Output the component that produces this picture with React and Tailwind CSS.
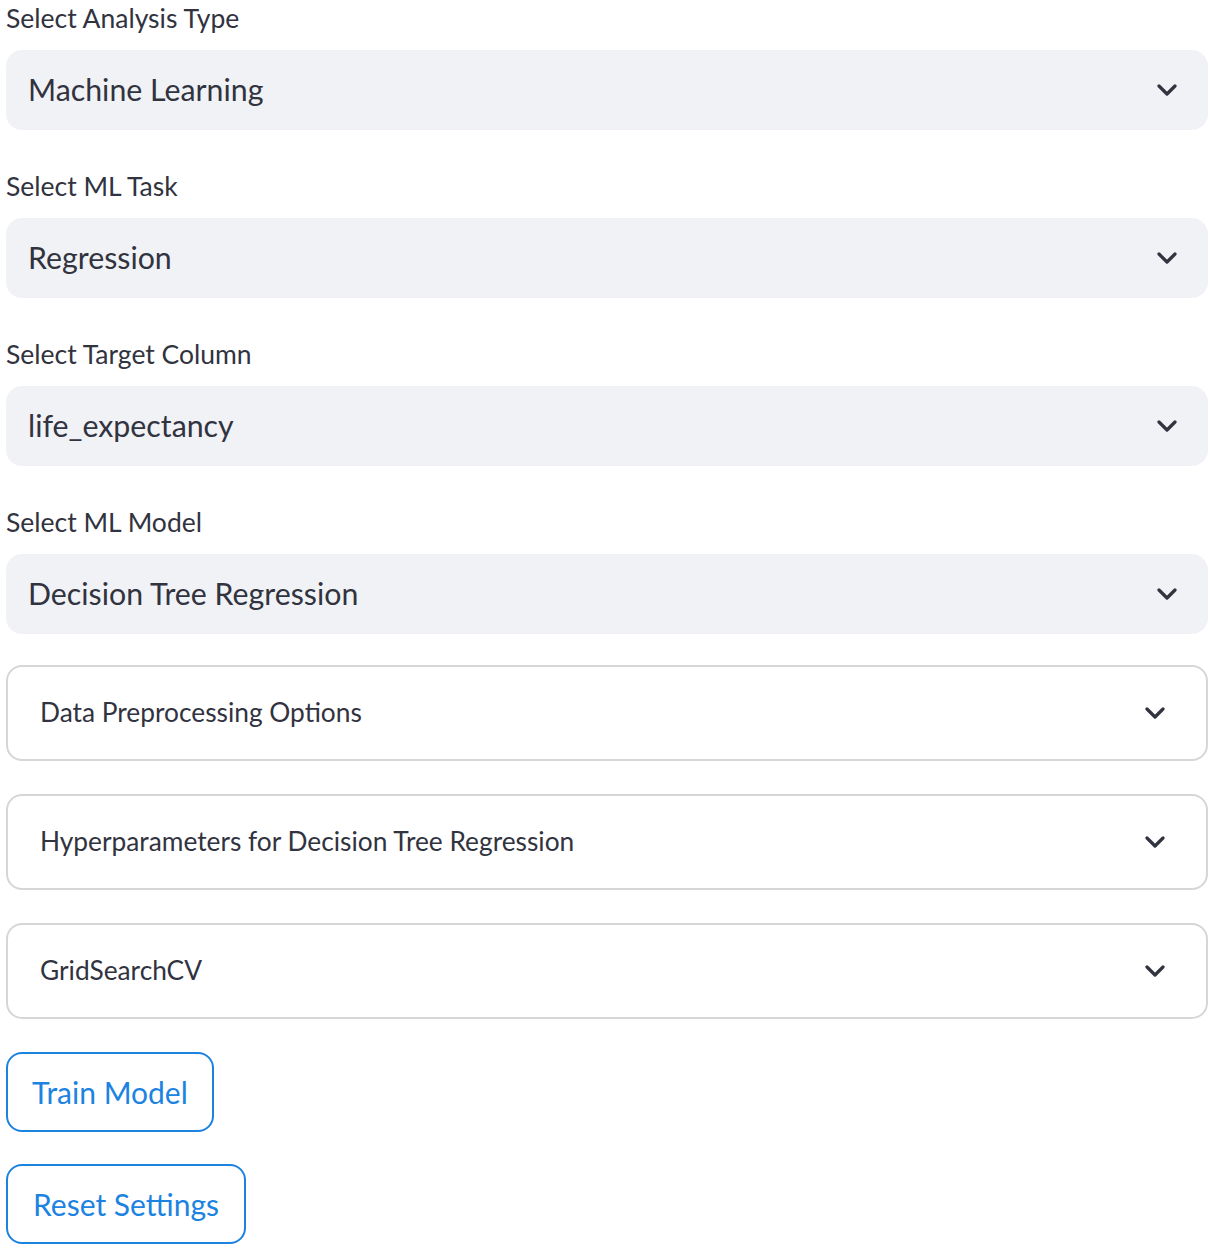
import { useState } from 'react';

const fields = [
  { label: 'Select Analysis Type', value: 'Machine Learning' },
  { label: 'Select ML Task', value: 'Regression' },
  { label: 'Select Target Column', value: 'life_expectancy' },
  { label: 'Select ML Model', value: 'Decision Tree Regression' },
];

const sections = [
  'Data Preprocessing Options',
  'Hyperparameters for Decision Tree Regression',
  'GridSearchCV',
];

function Chevron() {
  return (
    <svg width="20" height="12" viewBox="0 0 20 12" fill="none">
      <path d="M2 2l8 8 8-8" stroke="#31333f" strokeWidth="3.2" strokeLinecap="round" strokeLinejoin="round" />
    </svg>
  );
}

function SelectField({ label, value }) {
  return (
    <div className="mb-[38px]">
      <div className="h-[50px] text-[26.5px] leading-[36px]">{label}</div>
      <div className="h-[80px] rounded-[16px] bg-[#f0f2f6] flex items-center justify-between pl-[22px] pr-[31px]">
        <span className="text-[30.3px]">{value}</span>
        <Chevron />
      </div>
    </div>
  );
}

function Expander({ title }) {
  const [open, setOpen] = useState(false);
  return (
    <div className="mb-[33px] rounded-[16px] border-2 border-[#d6d6d9]">
      <button
        onClick={() => setOpen(!open)}
        className="w-full h-[92px] flex items-center justify-between pl-[32px] pr-[41px] text-left"
      >
        <span className="text-[26.3px]">{title}</span>
        <Chevron />
      </button>
    </div>
  );
}

export default function App() {
  return (
    <div className="pl-[6px] pr-[10px] font-['Lato',sans-serif] text-[#31333f] bg-white min-h-screen">
      {fields.map(f => (
        <SelectField key={f.label} label={f.label} value={f.value} />
      ))}
      <div className="-mt-[7px]">
        {sections.map(s => (
          <Expander key={s} title={s} />
        ))}
      </div>
      <div className="flex flex-col items-start gap-[32px]">
        <button className="h-[80px] px-[24px] rounded-[16px] border-2 border-[#1c83e1] text-[#1c83e1] text-[30px]">Train Model</button>
        <button className="h-[80px] px-[25px] rounded-[16px] border-2 border-[#1c83e1] text-[#1c83e1] text-[30px]">Reset Settings</button>
      </div>
    </div>
  );
}
